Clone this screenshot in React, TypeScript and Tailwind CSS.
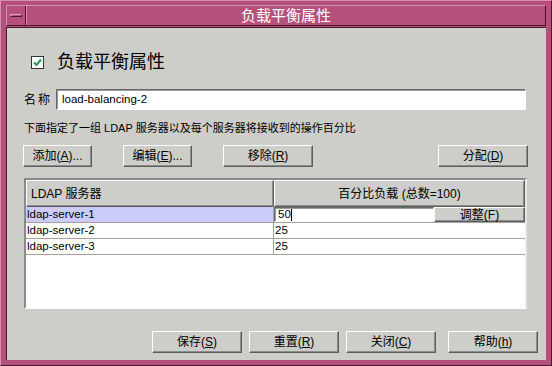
const FONT = "font-['Liberation_Sans','Noto_Sans_CJK_SC',sans-serif]";

const raised =
  "border border-t-white border-l-white border-r-[#5e5e5e] border-b-[#5e5e5e] shadow-[inset_-1px_-1px_0_#8c8c8c]";
const sunken =
  "border border-t-[#6a6a6a] border-l-[#6a6a6a] border-r-white border-b-white shadow-[inset_1px_1px_0_#9a9a9a]";

function Btn({ label, mn, rest = "", w }: { label: string; mn: string; rest?: string; w: string }) {
  return (
    <button className={`${w} h-[22px] bg-[#cdcdc9] ${raised} text-[12px] text-black flex items-center justify-center`}>
      {label}(<u>{mn}</u>){rest}
    </button>
  );
}

const rows = [
  { name: "ldap-server-1", value: "50" },
  { name: "ldap-server-2", value: "25" },
  { name: "ldap-server-3", value: "25" },
];

export default function App() {
  return (
    <div
      className={`${FONT} w-[552px] h-[366px] bg-[#b5507a] border border-t-[#d98fae] border-l-[#d98fae] border-r-[#4a1830] border-b-[#4a1830] pt-[4px] pl-[5px] pr-[5px] pb-[5px] flex flex-col`}
    >
      {/* title bar */}
      <div className="h-[21px] flex border border-t-[#d98fae] border-l-[#d98fae] border-r-[#4a1830] border-b-[#4a1830]">
        <div className="w-[19px] flex items-center justify-center border-r border-r-[#4a1830]">
          <div className="w-[12px] h-[3px] border border-t-[#e3a3bd] border-l-[#e3a3bd] border-r-[#4a1830] border-b-[#4a1830]" />
        </div>
        <div className="flex-1 flex items-center justify-center text-white text-[15px] leading-none border-l border-l-[#d98fae]">
          负载平衡属性
        </div>
      </div>

      {/* body */}
      <div className="flex-1 mt-[1px] bg-[#cdcdc9] flex flex-col border-t border-l border-t-[#4a1830] border-l-[#4a1830] text-black">
        <div className="mt-[21px] h-[26px] pl-[24px] flex items-center gap-[13px]">
          <div className="w-[13px] h-[13px] bg-white border border-[#333] flex items-center justify-center">
            <svg width="11" height="11" viewBox="0 0 11 11">
              <path d="M2 5.5 L4.5 8 L9 2.5" stroke="#1f9a5a" strokeWidth="2" fill="none" />
            </svg>
          </div>
          <span className="text-[18px] leading-none">负载平衡属性</span>
        </div>

        <div className="mt-[14px] h-[21px] pl-[17px] flex items-center">
          <span className="w-[32px] text-[12px] tracking-[2px]">名称</span>
          <div className={`w-[470px] h-[21px] bg-white ${sunken} flex items-center pl-[5px] text-[11.5px]`}>
            load-balancing-2
          </div>
        </div>

        <div className="mt-[10px] h-[16px] pl-[17px] flex items-center text-[11px] whitespace-nowrap">
          下面指定了一组 LDAP 服务器以及每个服务器将接收到的操作百分比
        </div>

        <div className="mt-[9px] h-[22px] pl-[16px] pr-[18px] flex items-center">
          <Btn w="w-[69px]" label="添加" mn="A" rest="..." />
          <div className="ml-[31px]">
            <Btn w="w-[69px]" label="编辑" mn="E" rest="..." />
          </div>
          <div className="ml-[31px]">
            <Btn w="w-[90px]" label="移除" mn="R" />
          </div>
          <div className="ml-auto">
            <Btn w="w-[90px]" label="分配" mn="D" />
          </div>
        </div>

        {/* table */}
        <div className="mt-[11px] ml-[17px] w-[503px] h-[131px] bg-white border-2 border-t-[#8a8a8a] border-l-[#8a8a8a] border-r-[#e8e8e8] border-b-white flex flex-col text-[12px]">
          <div className="h-[27px] flex">
            <div className={`w-[248px] bg-[#cdcdc9] ${raised} flex items-center pl-[4px]`}>LDAP 服务器</div>
            <div className={`flex-1 bg-[#cdcdc9] ${raised} flex items-center justify-center`}>百分比负载 (总数=100)</div>
          </div>
          {rows.map((r, i) => (
            <div key={r.name} className="h-[16px] flex border-b border-b-[#a2a2a2]">
              <div
                className={`w-[248px] border-r border-r-[#a2a2a2] flex items-center pl-[1px] text-[11.5px] ${
                  i === 0 ? "bg-[#ccccfa]" : "bg-white"
                }`}
              >
                {r.name}
              </div>
              {i === 0 ? (
                <div className="flex-1 flex">
                  <div className={`w-[160px] bg-white ${sunken} flex items-center pl-[3px] text-[11.5px]`}>
                    {r.value}
                    <span className="w-px h-[12px] bg-black" />
                  </div>
                  <div className={`flex-1 bg-[#cdcdc9] ${raised} flex items-center justify-center text-[12px]`}>
                    调整(F)
                  </div>
                </div>
              ) : (
                <div className="flex-1 flex items-center pl-[1px] text-[11.5px]">{r.value}</div>
              )}
            </div>
          ))}
        </div>

        <div className="mt-[22px] h-[22px] pr-[8px] flex items-center justify-end">
          <Btn w="w-[90px]" label="保存" mn="S" />
          <div className="ml-[7px]">
            <Btn w="w-[90px]" label="重置" mn="R" />
          </div>
          <div className="ml-[7px]">
            <Btn w="w-[90px]" label="关闭" mn="C" />
          </div>
          <div className="ml-[12px]">
            <Btn w="w-[90px]" label="帮助" mn="h" />
          </div>
        </div>
      </div>
    </div>
  );
}
